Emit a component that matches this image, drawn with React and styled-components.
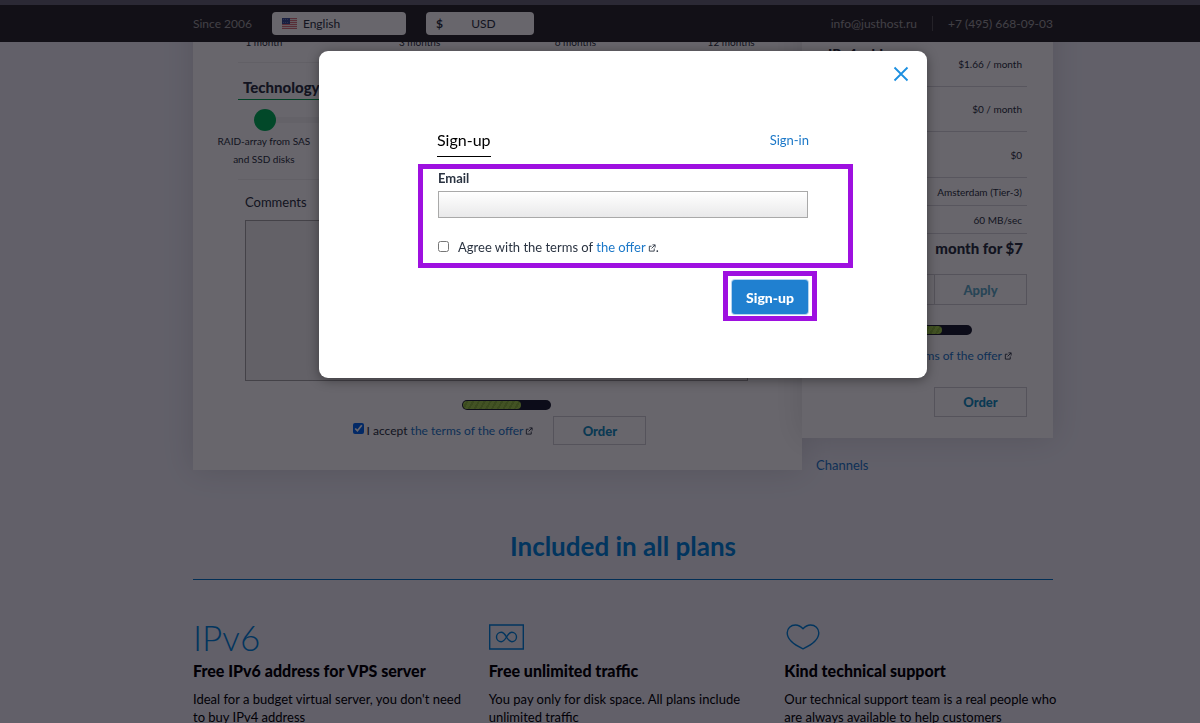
import React, { useState } from "react";
import styled, { createGlobalStyle } from "styled-components";

const GlobalStyle = createGlobalStyle`
  *, *::before, *::after { box-sizing: border-box; }
  body { margin: 0; background: #eff0f8; }
  body, button, input, select, textarea { font-family: Lato, "Open Sans", sans-serif; }
  a { text-decoration: none; }
`;

const Page = styled.div`
  height: 100vh;
  overflow: hidden;
  color: #2b3442;
  font-size: 13px;
`;

const TopBar = styled.header`
  position: fixed;
  inset: 0 0 auto 0;
  z-index: 2;
  border-top: 5px solid #666676;
  background: #2a2a2c;
  padding-left: 46px;
`;

const TopBarInner = styled.div`
  display: flex;
  align-items: center;
  width: 860px;
  max-width: 100%;
  height: 37px;
  margin: 0 auto;
  color: #a0a0a0;
  font-size: 12px;
  line-height: 18px;
`;

const Picker = styled.label`
  display: flex;
  align-items: center;
  width: ${(p) => p.$width};
  height: 23px;
  margin-left: 20px;
  padding: 0 10px;
  border-radius: 4px;
  background: #fff;
  color: #2b3442;
`;

const PickerSelect = styled.select`
  appearance: none;
  flex: 1;
  min-width: 0;
  padding: 0 6px;
  border: 0;
  background: transparent;
  color: inherit;
  font-size: 12px;
  text-align: ${(p) => p.$align};
  text-align-last: ${(p) => p.$align};
`;

const Contact = styled.a`
  color: #a0a0a0;
  &:first-of-type { margin-left: auto; padding-right: 15px; border-right: 1px solid #555; line-height: 15px; }
  &:last-of-type { padding-left: 15px; }
`;

const Content = styled.main`
  padding-left: 46px;
`;

const Container = styled.div`
  width: 860px;
  max-width: 100%;
  margin: 0 auto;
`;

const Configurator = styled.section`
  display: flex;
  align-items: flex-start;
`;

const Card = styled.div`
  background: #fff;
  box-shadow: 0 0 30px rgba(0, 0, 0, 0.12);
`;

const PlanCard = styled(Card)`
  flex: 1;
  min-width: 0;
  padding: 33px 45px 25px;
`;

const Scale = styled.div`
  display: grid;
  grid-template-columns: repeat(4, 1fr);
  margin: 0 -52px;
  padding-bottom: 11px;
  font-size: 10px;
  line-height: 18px;
  text-align: center;
`;

const Rule = styled.hr`
  margin: 0;
  border: 0;
  border-top: 1px solid #f0f0f0;
`;

const OptionTitle = styled.h3`
  margin: 0 0 9px;
  padding: 15px 5px 3px;
  border-bottom: 1px solid #00a651;
  font-size: 15px;
  font-weight: 900;
  line-height: 18px;
`;

const Track = styled.div`
  display: flex;
  align-items: center;
  height: 22px;
  margin: 0 16px 1px;
  background: linear-gradient(#f5f5f5, #f5f5f5) center / 100% 6px no-repeat;
`;

const Handle = styled.button`
  width: 22px;
  height: 22px;
  padding: 0;
  border: 0;
  border-radius: 50%;
  background: #00b359;
`;

const CommentField = styled.div`
  display: flex;
  flex-direction: column;
  padding: 13px 9px 19px 7px;
  label { font-size: 13px; line-height: 18px; }
  textarea {
    height: 161px;
    margin-top: 9px;
    border: 1px solid #a6a6a6;
    border-radius: 0;
    background: #f2f2f2;
    resize: none;
  }
`;

const Progress = styled.div`
  width: 89px;
  height: 10px;
  margin: ${(p) => p.$margin};
  padding: 1px;
  border-radius: 5px;
  background: #1b2030;
  &::before {
    content: "";
    display: block;
    width: 58px;
    height: 8px;
    border-radius: 4px;
    background: repeating-linear-gradient(120deg, #a4cf4c 0 3px, #8db83e 3px 5px);
  }
`;

const AcceptRow = styled.div`
  display: flex;
  align-items: center;
  justify-content: center;
  gap: 20px;
  padding: 6px 0 0 4px;
`;

const Accept = styled.label`
  display: flex;
  align-items: center;
  gap: 3px;
  font-size: 12px;
  line-height: 18px;
  white-space: nowrap;
  input { width: 11px; height: 11px; margin: 0 0 4px; accent-color: #0066f0; }
`;

const Link = styled.a`
  color: #1c78c8;
`;

const ExternalMark = styled.svg`
  margin-left: 2px;
`;

const GhostButton = styled.button`
  width: 93px;
  height: ${(p) => p.$height || "29px"};
  padding: 0;
  border: 1px solid #d0d0d4;
  background: transparent;
  color: ${(p) => (p.$muted ? "#5fadc8" : "#1690c0")};
  font-size: 13px;
  font-weight: 900;
`;

const SummaryColumn = styled.aside`
  flex: none;
  width: 251px;
`;

const SummaryCard = styled(Card)`
  padding: 42px 26px 21px;
`;

const SummaryRow = styled.div`
  display: flex;
  align-items: center;
  justify-content: space-between;
  height: ${(p) => p.$height};
  padding-right: 5px;
  border-bottom: 1px solid #d8d8dc;
  font-size: 10px;
  line-height: 14px;
`;

const SummaryLabel = styled.b`
  align-self: flex-start;
  margin-top: 5px;
  font-size: 14px;
  font-weight: 900;
`;

const Total = styled.p`
  margin: 0;
  padding: 5px 4px 17px 0;
  font-size: 15px;
  font-weight: 900;
  line-height: 18px;
  text-align: right;
`;

const Promo = styled.div`
  display: flex;
  input {
    flex: 1;
    min-width: 0;
    height: 31px;
    border: 1px solid #d0d0d4;
    border-right: 0;
    background: transparent;
  }
`;

const SummaryFoot = styled.div`
  display: flex;
  flex-direction: column;
  align-items: flex-end;
  label { margin: 0 15px 22px 0; }
`;

const ChannelsLink = styled(Link)`
  display: block;
  margin: 18px 14px 0;
  line-height: 18px;
`;

const SectionTitle = styled.h2`
  margin: 0;
  padding: 57px 0 17px;
  border-bottom: 1px solid #0077c8;
  color: #0084dc;
  font-size: 26px;
  font-weight: 700;
  line-height: 31px;
  text-align: center;
`;

const Features = styled.div`
  display: grid;
  grid-template-columns: repeat(3, 1fr);
  gap: 27px;
  padding-top: 41px;
`;

const Feature = styled.article`
  color: #000;
  h3 { margin: 7px 0 8px; font-size: 16px; font-weight: 900; line-height: 22px; white-space: nowrap; }
  p { margin: 0 -6px 0 0; font-size: 13px; line-height: 18px; }
`;

const FeatureIcon = styled.div`
  display: flex;
  align-items: center;
  height: 32px;
  color: #0084dc;
  font-size: 35px;
  font-weight: 300;
`;

const Overlay = styled.div`
  position: fixed;
  inset: 0;
  z-index: 3;
  display: flex;
  align-items: flex-start;
  justify-content: center;
  padding: 51px 0 0 46px;
  background: rgba(4, 0, 10, 0.6);
`;

const Dialog = styled.div`
  position: relative;
  width: 608px;
  max-width: 100%;
  padding: 78px 74px 57px 99px;
  border-radius: 9px;
  background: #fff;
  box-shadow: 0 2px 12px rgba(0, 0, 0, 0.4);
`;

const CloseButton = styled.button`
  position: absolute;
  top: 15px;
  right: 18px;
  display: flex;
  padding: 0;
  border: 0;
  background: none;
  color: #1c8fe0;
`;

const Tabs = styled.nav`
  display: flex;
  align-items: flex-start;
  justify-content: space-between;
  padding: 0 44px 7px 19px;
`;

const ActiveTab = styled.h2`
  margin: 0;
  padding-bottom: 5px;
  border-bottom: 1px solid #000;
  color: #000;
  font-size: 16px;
  font-weight: 400;
  line-height: 22px;
`;

const TabLink = styled(Link)`
  line-height: 23px;
`;

const FieldsFrame = styled.div`
  border: 5px solid #9e10e0;
  padding: 0 40px 7px 15px;
`;

const EmailField = styled.label`
  display: flex;
  flex-direction: column;
  font-weight: 700;
  line-height: 18px;
  input {
    height: 27px;
    margin: 4px 0 20px;
    padding: 0 8px;
    border: 1px solid #a9a9a9;
    background: linear-gradient(#fff, #e9e9ea);
  }
`;

const Agree = styled.label`
  display: flex;
  align-items: center;
  line-height: 18px;
  input { width: 11px; height: 11px; margin: 0 9px 2px 0; }
`;

const SubmitFrame = styled.div`
  width: 94px;
  margin: 3px 36px 0 auto;
  padding: 4px 4px 2px;
  border: 5px solid #9e10e0;
`;

const SubmitButton = styled.button`
  display: block;
  width: 76px;
  height: 34px;
  padding: 0;
  border: 0;
  border-radius: 3px;
  background: #2080d0;
  box-shadow: 0 0 0 1px #b5d3ef;
  color: #fff;
  font-size: 14px;
  font-weight: 900;
`;

const External = () => (
  <ExternalMark width="8" height="8" viewBox="0 0 9 9" fill="none" stroke="#2b3442" aria-hidden="true">
    <path d="M4 2.5H1.500v5.500h5.500V5M5 1h3v3M8 1L4 5" />
  </ExternalMark>
);

const Flag = () => (
  <svg width="15" height="11" viewBox="0 0 15 11" aria-hidden="true">
    <path fill="#f3e4e4" d="M0 0h15v11H0z" />
    <path stroke="#d8707a" d="M0 .5h15M0 2.5h15M0 4.5h15M0 6.5h15M0 8.5h15M0 10.5h15" />
    <path fill="#3a4f94" d="M0 0h8v6H0z" />
    <path stroke="#6f80b8" strokeDasharray="1 1" d="M1 1.5h6M1 4.5h6" />
  </svg>
);

const summary = [
  { label: "IPv4 address", value: "$1.66 / month", height: "45px" },
  { label: "Administration", value: "$0 / month", height: "45px" },
  { label: "Setup", value: "$0", height: "46px" },
  { label: "Location", value: "Amsterdam (Tier-3)", height: "28px" },
  { label: "Channel", value: "60 MB/sec", height: "28px" },
];

const features = [
  { title: "Free IPv6 address for VPS server", text: "Ideal for a budget virtual server, you don't need to buy IPv4 address", icon: "IPv6" },
  {
    title: "Free unlimited traffic",
    text: "You pay only for disk space. All plans include unlimited traffic",
    icon: (
      <svg width="35" height="26" viewBox="0 0 35 26" fill="none" stroke="currentColor" aria-hidden="true">
        <path d="M.7 1h33.600v24H.7z" strokeWidth="1.4" />
        <path
          d="M17.500 13C15.500 9.600 14.300 8.300 12.200 8.300a4.700 4.700 0 0 0 0 9.400c2.100 0 3.300-1.300 5.300-4.700s3.200-4.700 5.300-4.700a4.700 4.700 0 0 1 0 9.400c-2.100 0-3.300-1.300-5.300-4.700z"
          strokeWidth="1.4"
        />
      </svg>
    ),
  },
  {
    title: "Kind technical support",
    text: "Our technical support team is a real people who are always available to help customers",
    icon: (
      <svg width="38" height="26" viewBox="0 0 38 26" fill="none" stroke="currentColor" strokeWidth="1.4" strokeLinejoin="round" aria-hidden="true">
        <path d="M19 4.800C16.500 2 14.500 1 11.500 1 6.800 1 3.200 4.200 3.200 8.800c0 6.700 7.300 12.200 15.800 16 8.500-3.800 15.800-9.300 15.800-16C34.800 4.200 31.200 1 26.500 1c-3 0-5 1-7.500 3.800z" />
      </svg>
    ),
  },
];

const OfferCheckbox = () => (
  <Accept>
    <input type="checkbox" defaultChecked />
    <span>
      I accept <Link href="#offer">the terms of the offer</Link>
      <External />
    </span>
  </Accept>
);

const SignUpDialog = ({ onClose }) => (
  <Overlay>
    <Dialog role="dialog" aria-modal="true" aria-labelledby="signup-title">
      <CloseButton type="button" aria-label="Close" onClick={onClose}>
        <svg width="16" height="16" viewBox="0 0 16 16" fill="none" stroke="currentColor" strokeWidth="1.8">
          <path d="M1.500 1.500l13 13M14.500 1.500l-13 13" />
        </svg>
      </CloseButton>
      <Tabs>
        <ActiveTab id="signup-title">Sign-up</ActiveTab>
        <TabLink href="#sign-in">Sign-in</TabLink>
      </Tabs>
      <FieldsFrame>
        <EmailField>
          Email
          <input type="email" />
        </EmailField>
        <Agree>
          <input type="checkbox" />
          <span>
            Agree with the terms of <Link href="#offer">the offer</Link>
            <External />.
          </span>
        </Agree>
      </FieldsFrame>
      <SubmitFrame>
        <SubmitButton type="button">Sign-up</SubmitButton>
      </SubmitFrame>
    </Dialog>
  </Overlay>
);

export default function App() {
  const [open, setOpen] = useState(true);
  return (
    <Page>
      <GlobalStyle />
      <TopBar>
        <TopBarInner>
          <span>Since 2006</span>
          <Picker $width="134px">
            <Flag />
            <PickerSelect $align="left" aria-label="Language">
              <option>English</option>
            </PickerSelect>
          </Picker>
          <Picker $width="108px">
            <b>$</b>
            <PickerSelect $align="center" aria-label="Currency">
              <option>USD</option>
            </PickerSelect>
          </Picker>
          <Contact href="mailto:info@justhost.ru">info@justhost.ru</Contact>
          <Contact href="tel:+74956680903">+7 (495) 668-09-03</Contact>
        </TopBarInner>
      </TopBar>
      <Content>
        <Container>
          <Configurator>
            <PlanCard>
              <Scale>
                <span>1 month</span>
                <span>3 months</span>
                <span>6 months</span>
                <span>12 months</span>
              </Scale>
              <Rule />
              <OptionTitle>Technology</OptionTitle>
              <Track>
                <Handle type="button" aria-label="RAID-array from SAS and SSD disks" />
              </Track>
              <Scale>
                <span>RAID-array from SAS<br />and SSD disks</span>
              </Scale>
              <Rule />
              <CommentField>
                <label htmlFor="comments">Comments</label>
                <textarea id="comments" />
              </CommentField>
              <Progress $margin="0 0 0 224px" />
              <AcceptRow>
                <OfferCheckbox />
                <GhostButton type="button">Order</GhostButton>
              </AcceptRow>
            </PlanCard>
            <SummaryColumn>
              <SummaryCard>
                {summary.map((row) => (
                  <SummaryRow key={row.label} $height={row.height}>
                    <SummaryLabel>{row.label}</SummaryLabel>
                    <span>{row.value}</span>
                  </SummaryRow>
                ))}
                <Total>month for $7</Total>
                <Promo>
                  <input type="text" aria-label="Promo code" />
                  <GhostButton type="button" $muted $height="31px">Apply</GhostButton>
                </Promo>
                <SummaryFoot>
                  <Progress $margin="20px 55px 12px 0" />
                  <OfferCheckbox />
                  <GhostButton type="button" $height="30px">Order</GhostButton>
                </SummaryFoot>
              </SummaryCard>
              <ChannelsLink href="#channels">Channels</ChannelsLink>
            </SummaryColumn>
          </Configurator>
          <SectionTitle>Included in all plans</SectionTitle>
          <Features>
            {features.map((f) => (
              <Feature key={f.title}>
                <FeatureIcon>{f.icon}</FeatureIcon>
                <h3>{f.title}</h3>
                <p>{f.text}</p>
              </Feature>
            ))}
          </Features>
        </Container>
      </Content>
      {open && <SignUpDialog onClose={() => setOpen(false)} />}
    </Page>
  );
}
